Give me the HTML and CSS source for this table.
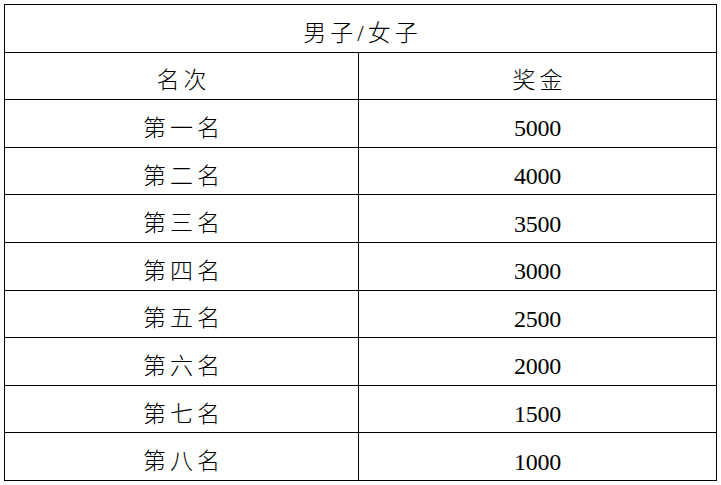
FILE: index.html
```html
<!DOCTYPE html>
<html lang="zh">
<head>
<meta charset="utf-8">
<link rel="stylesheet" href="styles.css">
</head>
<body>
<table class="prize">
  <colgroup><col class="col-rank"><col class="col-prize"></colgroup>
  <tr><th class="title" colspan="2">男子/女子</th></tr>
  <tr><td class="cjk">名次</td><td class="cjk">奖金</td></tr>
  <tr><td class="cjk">第一名</td><td class="num">5000</td></tr>
  <tr><td class="cjk">第二名</td><td class="num">4000</td></tr>
  <tr><td class="cjk">第三名</td><td class="num">3500</td></tr>
  <tr><td class="cjk">第四名</td><td class="num">3000</td></tr>
  <tr><td class="cjk">第五名</td><td class="num">2500</td></tr>
  <tr><td class="cjk">第六名</td><td class="num">2000</td></tr>
  <tr><td class="cjk">第七名</td><td class="num">1500</td></tr>
  <tr><td class="cjk">第八名</td><td class="num">1000</td></tr>
</table>
</body>
</html>
```
FILE: styles.css
```css
html, body {
  margin: 0;
  padding: 0;
  background: #fff;
}
body {
  padding: 4px 0 0 4px;
}
.prize {
  border-collapse: collapse;
  width: 712px;
  table-layout: fixed;
  font-family: "Liberation Serif", "Noto Sans CJK SC", serif;
  color: #000;
}
.col-rank {
  width: 354px;
}
.col-prize {
  width: 358px;
}
.prize th, .prize td {
  border: 1px solid #000;
  height: 47.6px;
  padding: 10px 0 0 0;
  box-sizing: border-box;
  text-align: center;
  vertical-align: middle;
  font-weight: 300;
  line-height: 1;
}
.cjk, .title {
  font-size: 23px;
  letter-spacing: 4px;
  text-indent: 4px;
}
.num {
  font-size: 24px;
  font-weight: 400;
  letter-spacing: -0.2px;
}
```
